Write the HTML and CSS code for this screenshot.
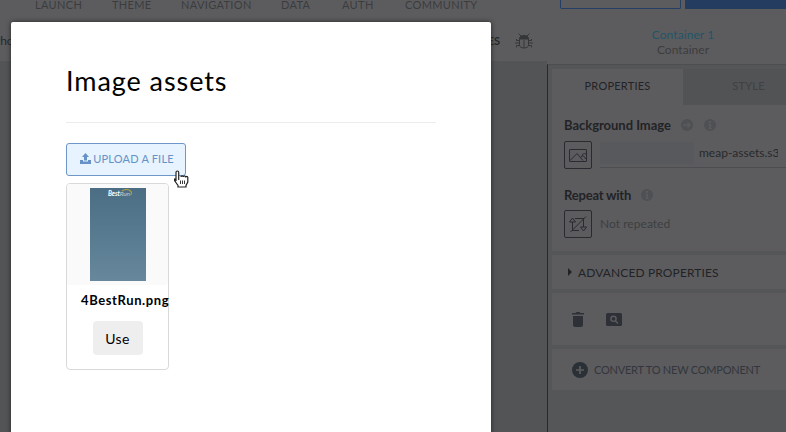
FILE: index.html
```html
<!DOCTYPE html>
<html lang="en">
<head>
<meta charset="utf-8">
<title>Image assets</title>
<link rel="stylesheet" href="styles.css">
</head>
<body>
<div class="app">
  <main class="workspace">
    <nav class="menu">
      <span class="m1">LAUNCH</span><span class="m2">THEME</span><span class="m3">NAVIGATION</span><span class="m4">DATA</span><span class="m5">AUTH</span><span class="m6">COMMUNITY</span>
    </nav>
    <div class="toolbar">
      <span class="device">Pho</span>
      <span class="variables">VARIABLES</span>
      <svg class="bug" width="18" height="16" viewBox="0 0 18 16" fill="none" stroke="#343638"><path d="M3.500 .5l2.500 2.500M14.500 .5l-2.500 2.500M4.500 6v6c0 2 2 3 4.500 3s4.500-1 4.500-3V6zM9 7v8M1.500 6v1.500h3M16.500 6v1.500h-3M0 10h4M18 10h-4M1.500 14.500v-2h3M16.500 14.500v-2h-3"/><path d="M4.500 5.500c0-4 9-4 9 0z" fill="#343638"/></svg>
    </div>
    <div class="canvas"></div>
  </main>
  <aside class="side">
    <div class="actions"><span class="outline"></span><span class="solid"></span></div>
    <header class="selection"><b>Container 1</b><span>Container</span></header>
    <div class="panel">
      <div class="tabs"><div class="tab active"><span>PROPERTIES</span></div><div class="tab"><span>STYLE</span></div></div>
      <section class="fields">
        <div class="label bg-label"><span>Background Image</span>
          <svg width="12" height="12" viewBox="0 0 12 12"><circle cx="6" cy="6" r="6" fill="#4e5053"/><path d="M2 6h7M6.500 3.500L9 6 6.500 8.500" fill="none" stroke="#5b5b5d" stroke-width="1.500"/></svg>
          <svg width="12" height="12" viewBox="0 0 12 12"><circle cx="6" cy="6" r="6" fill="#4e5053"/><path d="M5 2h2v2H5zM4.500 5H7v4h1v1H4.500V9h.8V6h-.8z" fill="#5b5b5d"/></svg>
        </div>
        <div class="field">
          <span class="picker"><svg width="26" height="26" viewBox="0 0 26 26" fill="none" stroke="#292b31"><rect x="4.500" y="7.500" width="17" height="12" rx=".5"/><path d="M5 18.500l7-7 6 7M15.500 15.500l2.500-2 3 3.500M17 14c0-2 2-3 4-2"/></svg></span>
          <span class="value"><i></i><em>meap-assets.s3</em></span>
        </div>
        <div class="label repeat-label"><span>Repeat with</span>
          <svg width="12" height="12" viewBox="0 0 12 12"><circle cx="6" cy="6" r="6" fill="#4e5053"/><path d="M5 2h2v2H5zM4.500 5H7v4h1v1H4.500V9h.8V6h-.8z" fill="#5b5b5d"/></svg>
        </div>
        <div class="field">
          <span class="picker"><svg width="26" height="26" viewBox="0 0 26 26" fill="none" stroke="#292b31"><path d="M7.500 11v8.500H14M10 7.500h8.500V16M4.500 11l3-4 3 4zM15.500 16h6l-3 4zM5.500 21L21 5.500"/></svg></span>
          <span class="placeholder">Not repeated</span>
        </div>
      </section>
      <section class="advanced"><i></i><span>ADVANCED PROPERTIES</span></section>
      <section class="tools">
        <svg width="12" height="15" viewBox="0 0 12 15" fill="#2d3037"><path d="M0 1h3.500l1-1h3l1 1H12v1.500H0zM1 4h10v9q0 2-2 2H3q-2 0-2-2z"/></svg>
        <svg width="16" height="13" viewBox="0 0 16 13"><rect width="16" height="13" rx="1.500" fill="#2d3037"/><circle cx="7.500" cy="5.800" r="2.600" fill="none" stroke="#5c5c5e" stroke-width="1.400"/><path d="M9.500 8l2.500 2.500" stroke="#5c5c5e" stroke-width="1.500"/></svg>
      </section>
      <section class="convert">
        <svg width="16" height="16" viewBox="0 0 16 16"><circle cx="8" cy="8" r="8" fill="#2b3037"/><path d="M8 4v8M4 8h8" stroke="#5c5c5e" stroke-width="1.700"/></svg>
        <span>CONVERT TO NEW COMPONENT</span>
      </section>
    </div>
  </aside>
</div>
<div class="dialog">
  <h1><span>Image assets</span></h1>
  <button class="upload"><svg width="11" height="11" viewBox="0 0 11 11" fill="#6592c7"><path d="M5.500 0L9 4H7v3.500H4V4H2zM0 7h3v1.500h5V7h3v4H0z"/></svg><span>UPLOAD A FILE</span></button>
  <article class="card">
    <div class="thumb"><div class="preview"><svg width="27" height="9" viewBox="0 0 27 9"><text x="1" y="7.200" class="brand" textLength="22"><tspan class="best">Best</tspan>Run</text><path d="M15 2q5-3 8.500 0 2 2 0 4" fill="none" stroke="#b69c45" stroke-width="1.100"/></svg></div></div>
    <div class="name"><span>4BestRun.png</span></div>
    <button class="use">Use</button>
  </article>
</div>
<svg class="cursor" width="15" height="18" viewBox="0 0 15 18"><path d="M4.700 10V2.500c0-2-2.700-2-2.700 0V11L1.700 9.700C.7 8.300-.3 9 .8 11L4 15.500V17h8v-1.500l1.800-3.500V7.500c0-1.500-2.200-1.500-2.200 0 0-2-2.300-2-2.300-.5 0-1.500-2.400-1.500-2.400 0" fill="#fff" stroke="#222" stroke-width="1.200"/><path d="M6.500 10.500v3.500M8.500 10.500v3.500M10.500 10.500v3.500" stroke="#222" stroke-width=".9"/></svg>
</body>
</html>
```

FILE: styles.css
```css
* { box-sizing: border-box; }
body { margin: 0; width: 786px; height: 432px; overflow: hidden; background: #5c5c5e; font-family: Lato, sans-serif; color: #000; }
svg { display: block; flex: none; }
.app { display: flex; height: 432px; }
.workspace { width: 547px; display: flex; flex-direction: column; }
.menu { height: 22px; padding-left: 35px; display: flex; font-size: 11px; line-height: 10px; color: #3b3c3e; letter-spacing: .35px; white-space: nowrap; }
.menu span { flex: none; }
.m1 { width: 77px; } .m2 { width: 69px; } .m3 { width: 100px; } .m4 { width: 61px; } .m5 { width: 63px; }
.toolbar { height: 39px; padding-bottom: 2px; display: flex; align-items: center; font-size: 12px; color: #27282a; }
.device { width: 400px; margin-left: -7px; }
.variables { width: 107px; text-align: right; font-weight: 700; font-size: 11px; }
.bug { margin-left: 15px; }
.canvas { flex: 1; background: #525456; }
.side { width: 239px; display: flex; flex-direction: column; }
.actions { height: 9px; display: flex; gap: 4px; padding-left: 13px; }
.outline { width: 121px; border: 1px solid #243e65; border-top: 0; border-radius: 0 0 2px 2px; }
.solid { flex: 1; background: #243c60; }
.selection { height: 55px; padding: 18px 0 0 33px; display: flex; flex-direction: column; align-items: center; font-size: 12px; line-height: 15px; color: #3c3d3f; letter-spacing: .08px; }
.selection b { font-weight: 400; color: #1f5668; }
.selection span { letter-spacing: .03px; }
.panel { flex: 1; min-width: 0; overflow: hidden; border-left: 1px solid #27292b; border-top: 1px solid #4c4f51; background: #545658; padding: 4px 0 0 4px; }
.tabs { height: 36px; display: flex; font-size: 11px; color: #3f4143; letter-spacing: .22px; }
.tab { flex: none; width: 131px; padding-bottom: 4px; display: flex; align-items: center; justify-content: center; background: #515355; }
.active { background: #5c5c5e; color: #222326; }
.fields { height: 146px; background: #5c5c5e; padding: 12px 0 0 12px; }
.label { display: flex; align-items: center; gap: 12px; font-size: 13px; font-weight: 700; line-height: 18px; color: #222326; position: relative; top: -1px; }
.bg-label span { width: 107px; white-space: nowrap; letter-spacing: -.03px; }
.bg-label span, .bg-label svg { margin-right: -1px; }
.bg-label span { margin-right: -2px; }
.repeat-label { margin-top: 17px; letter-spacing: -.2px; gap: 10px; }
.repeat-label { top: 0; }
.field { display: flex; height: 28px; margin-top: 6px; gap: 8px; }
.picker { width: 28px; height: 28px; border: 1px solid #292b31; border-radius: 2px; }
.value { flex: 1; border-bottom: 1px solid #4c4e51; display: flex; align-items: center; height: 27px; padding-bottom: 3px; }
.value i { width: 94px; height: 22px; background: #58595c; flex: none; }
.value em { margin-left: 5px; width: 79px; overflow: hidden; white-space: nowrap; font-style: normal; font-size: 12px; color: #28292c; }
.placeholder { align-self: center; padding-bottom: 1px; font-size: 12px; color: #3d3f41; letter-spacing: .04px; }
.advanced { margin-top: 4px; height: 34px; background: #5c5c5e; padding-left: 16px; display: flex; align-items: center; gap: 6px; font-size: 12px; color: #222326; letter-spacing: .12px; }
.advanced i { border: 4px solid transparent; border-left: 4px solid #222326; border-right: 0; }
.tools { margin-top: 4px; height: 52px; background: #5c5c5e; padding-left: 20px; display: flex; align-items: center; gap: 22px; }
.convert { margin-top: 4px; height: 41px; background: #5c5c5e; padding-left: 20px; display: flex; align-items: center; gap: 6px; font-size: 11px; color: #32363d; letter-spacing: -.22px; white-space: nowrap; }
.dialog { position: absolute; left: 11px; top: 22px; width: 480px; height: 420px; background: #fff; border-radius: 2px; box-shadow: 0 0 5px #262729; padding: 0 55px; }
h1 { margin: 0; height: 101px; padding-top: 42px; border-bottom: 1px solid #ececec; font-size: 27px; line-height: 34px; font-weight: 400; letter-spacing: .93px; }
button { border: 0; padding: 0; font-family: inherit; }
.upload { margin-top: 20px; width: 120px; height: 33px; padding: 0 0 2px 2px; border: 1px solid #6f96c8; border-radius: 3px; background: #e7f3fe; display: flex; align-items: center; justify-content: center; gap: 2px; font-size: 11px; color: #6592c7; letter-spacing: .2px; white-space: nowrap; }
.card { width: 103px; height: 187px; margin-top: 7px; border: 1px solid #d9d9d9; border-radius: 4px; display: flex; flex-direction: column; align-items: center; }
.thumb { width: 101px; height: 101px; padding: 4px 0 0 23px; background: #fafafa; border-radius: 3px; }
.preview { width: 56px; height: 93px; background: linear-gradient(#4b6e84, #66879c); padding: 1px 0 0 17px; }
.brand { font-size: 6.500px; fill: #bdced7; font-style: italic; }
.best { fill: #fff; font-weight: 700; }
.name { width: 73px; margin-top: 6px; white-space: nowrap; font-size: 13px; line-height: 18px; font-weight: 700; letter-spacing: .6px; }
.use { width: 50px; height: 34px; margin-top: 12px; border-radius: 4px; background: #eee; font-size: 14px; color: #000; letter-spacing: .3px; }
.cursor { position: absolute; left: 174px; top: 170px; }
```
